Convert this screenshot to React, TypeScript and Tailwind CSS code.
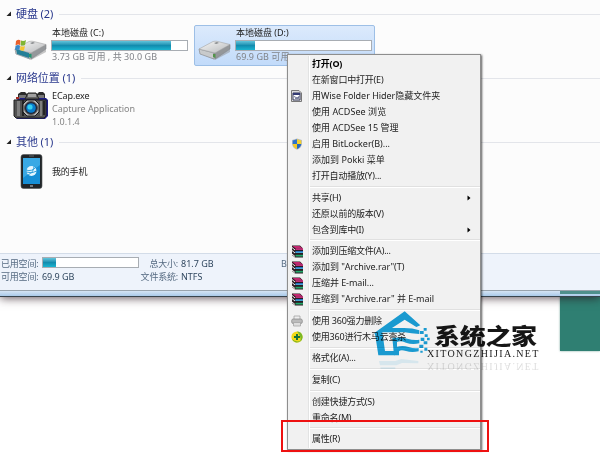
import type { ReactNode } from 'react';

interface MenuEntry {
  label?: string;
  icon?: ReactNode;
  bold?: boolean;
  submenu?: boolean;
  tracking?: string;
}

const menuEntries: MenuEntry[] = [
  { label: '打开(O)', bold: true },
  { label: '在新窗口中打开(E)' },
  { label: '用Wise Folder Hider隐藏文件夹', icon: <WiseIcon />, tracking: 'tracking-[-0.03px]' },
  { label: '使用 ACDSee 浏览', tracking: 'tracking-[0.05px]' },
  { label: '使用 ACDSee 15 管理', tracking: 'tracking-[0.02px]' },
  { label: '启用 BitLocker(B)...', icon: <ShieldIcon />, tracking: 'tracking-[-0.02px]' },
  { label: '添加到 Pokki 菜单', tracking: 'tracking-[0.03px]' },
  { label: '打开自动播放(Y)...' },
  {},
  { label: '共享(H)', submenu: true },
  { label: '还原以前的版本(V)' },
  { label: '包含到库中(I)', submenu: true },
  {},
  { label: '添加到压缩文件(A)...', icon: <RarIcon /> },
  { label: '添加到 "Archive.rar"(T)', icon: <RarIcon />, tracking: 'tracking-[-0.05px]' },
  { label: '压缩并 E-mail...', icon: <RarIcon />, tracking: 'tracking-[-0.05px]' },
  { label: '压缩到 "Archive.rar" 并 E-mail', icon: <RarIcon />, tracking: 'tracking-[-0.02px]' },
  {},
  { label: '使用 360强力删除', icon: <ShredIcon /> },
  { label: '使用360进行木马云查杀', icon: <ScanIcon /> },
  {},
  { label: '格式化(A)...' },
  {},
  { label: '复制(C)' },
  {},
  { label: '创建快捷方式(S)' },
  { label: '重命名(M)' },
  {},
  { label: '属性(R)' },
];

export default function App() {
  return (
    <div className="relative h-[456px] w-[600px] overflow-hidden bg-white font-['Noto_Sans','Noto_Sans_CJK_SC',sans-serif] text-[9px] leading-[12px] tracking-[-0.2px] text-[#222]">
      <div className="absolute left-[560px] top-[290px] h-[61px] w-10 bg-[#2f7f72] shadow-[0_0_2px_#7aa79f]" />
      <ExplorerWindow />
      <ContextMenu />
      <Watermark />
      <div className="absolute left-[281px] top-[420px] h-[32px] w-[208px] border-2 border-[#ee1111]" />
    </div>
  );
}

function ExplorerWindow() {
  return (
    <div className="relative flex h-[297px] flex-col bg-[#fcfcfc] shadow-[0_1px_9px_rgba(40,20,30,0.75)]">
      <div className="flex h-[253px] flex-col">
        <GroupHeader title="硬盘 (2)" className="mt-[6px]" />
        <div className="mt-[3px] flex h-[41px] pl-[10px]">
          <Drive name="本地磁盘 (C:)" info="3.73 GB 可用 , 共 30.0 GB" percent={88} system />
          <Drive name="本地磁盘 (D:)" info="69.9 GB 可用" percent={14} selected />
        </div>
        <GroupHeader title="网络位置 (1)" className="mt-[4px]" />
        <div className="mt-[4px] flex h-[39px] pl-[13px]">
          <CameraIcon />
          <div className="ml-[3px] leading-[12.8px]">
            <p className="tracking-[-0.1px]">ECap.exe</p>
            <p className="tracking-[-0.02px] text-[#858585]">Capture Application</p>
            <p className="tracking-[-0.02px] text-[#858585]">1.0.1.4</p>
          </div>
        </div>
        <GroupHeader title="其他 (1)" className="mt-[5px]" />
        <div className="mt-[4px] flex items-center pl-[20px]">
          <PhoneIcon />
          <span className="ml-[9px]">我的手机</span>
        </div>
      </div>
      <DetailsPane />
      <div className="h-px bg-[#98a3ad]" />
      <div className="flex h-[5px] bg-gradient-to-b from-[#d5e4f4] to-[#a9c9e9]">
        <div className="ml-auto h-[3px] w-10 bg-[#4f8f8c]" />
      </div>
      <div className="h-px bg-[#38434c]" />
    </div>
  );
}

function GroupHeader({ title, className }: { title: string; className: string }) {
  return (
    <div className={`flex h-4 shrink-0 items-center pl-[6px] ${className}`}>
      <svg width="6" height="6" viewBox="0 0 6 6">
        <path d="M5 0.5V5H0.5Z" fill="#222" />
      </svg>
      <h2 className="ml-[4px] whitespace-nowrap text-[11px] leading-4 tracking-[-0.08px] text-[#28378c]">{title}</h2>
      <div className="ml-[6px] h-px flex-1 bg-[#e3e5ea]" />
    </div>
  );
}

interface DriveProps {
  name: string;
  info: string;
  percent: number;
  system?: boolean;
  selected?: boolean;
}

function Drive({ name, info, percent, system, selected }: DriveProps) {
  return (
    <div
      className={`flex rounded-[2px] border ${
        selected
          ? 'w-[181px] border-[#9dbfe6] bg-gradient-to-b from-[#dceafc] to-[#c2dbfa] pl-[2px]'
          : 'mr-[3px] w-[181px] border-transparent pl-[2px]'
      }`}
    >
      <DriveIcon system={system} />
      <div className="ml-[2px] mt-px">
        <p className="whitespace-nowrap pl-px tracking-[0px]">{name}</p>
        <CapacityBar percent={percent} className="mt-px h-[11px] w-[137px]" />
        <p className="whitespace-nowrap pl-px tracking-[0.05px] text-[#808388]">{info}</p>
      </div>
    </div>
  );
}

function CapacityBar({ percent, className }: { percent: number; className: string }) {
  return (
    <div className={`border border-[#a8adb3] bg-white ${className}`}>
      <div
        className="h-full bg-gradient-to-b from-[#5fc5dc] via-[#128cae] to-[#1bb4d0]"
        style={{ width: `${percent}%` }}
      />
    </div>
  );
}

function DetailsPane() {
  return (
    <div className="flex h-[37px] border-t border-[#d3dce8] bg-[#eef3fb] pt-[3px] leading-[13px] text-[#566b82]">
      <div className="w-[41px] whitespace-nowrap pl-px">
        <p>已用空间:</p>
        <p>可用空间:</p>
      </div>
      <div className="w-[99px] text-[#30475f]">
        <CapacityBar percent={14} className="mb-[2px] ml-px h-[11px] w-[97px]" />
        <p className="pl-px tracking-[-0.05px]">69.9 GB</p>
      </div>
      <div className="w-[38px] whitespace-nowrap text-right">
        <p>总大小:</p>
        <p>文件系统:</p>
      </div>
      <div className="ml-[3px] w-[100px] tracking-[0px] text-[#30475f]">
        <p>81.7 GB</p>
        <p>NTFS</p>
      </div>
      <p>B</p>
    </div>
  );
}

function ContextMenu() {
  return (
    <div className="absolute left-[287px] top-[54px] h-[396px] w-[194px] border border-[#8e8e8e] bg-[#f1f1f1] py-px shadow-[1px_1px_2px_rgba(0,0,0,0.65)]">
      <div className="h-full bg-[linear-gradient(to_right,transparent_20px,#e2e3e3_20px,#e2e3e3_21px,#fff_21px,#fff_22px,transparent_22px)]">
        {menuEntries.map((entry, i) =>
          entry.label ? (
            <div key={i} className="flex h-4 items-center">
              <div className="flex w-[24px] shrink-0 pl-[3px]">{entry.icon}</div>
              <span
                className={`whitespace-nowrap leading-4 ${entry.bold ? 'font-bold text-black' : ''} ${entry.tracking ?? ''}`}
              >
                {entry.label}
              </span>
              {entry.submenu && (
                <svg className="ml-auto mr-[9px]" width="4" height="6" viewBox="0 0 4 6">
                  <path d="M0.5 0.5L3.5 3L0.5 5.5Z" fill="#000" />
                </svg>
              )}
            </div>
          ) : (
            <div key={i} className="flex h-[5.6px] items-center pl-[22px]">
              <div className="h-[2px] flex-1 border-t border-[#e0e0e0] bg-white" />
            </div>
          ),
        )}
      </div>
    </div>
  );
}

function Watermark() {
  return (
    <div className="absolute left-[374px] top-[311px] flex mix-blend-multiply">
      <svg width="56" height="60" viewBox="12 18 168 180">
        <g fill="#1ba3dc">
          <path d="M13 84L104 19L151 61L139 66L104 44L66 69H102Q128 69 148 76V87Q123 86 104 82H37L45 138H74V151H25L16 92Z" />
          <path d="M67 99Q92 95 112 101T148 104V115Q126 120 108 113T81 111V125Q99 120 116 126T146 129V139Q124 143 108 138T87 139V151H72Z" />
          <path d="M150 78h11v9h-11zM161 69h9v8h-9zM164 88h9v8h-9zM152 98h11v10h-11zM171 98h8v8h-8zM161 109h11v9h-11zM148 119h12v10h-12zM163 128h9v9h-9zM151 137h7v6h-7z" />
        </g>
        <path d="M27 168H76L94 162L145 168V175L96 174L79 181H30ZM31 187H76V192H32Z" fill="#1ba3dc" opacity=".12" />
      </svg>
      <div className="-ml-[1px] pt-[13px]">
        <p className="ml-[5px] origin-top scale-y-[0.84] whitespace-nowrap font-['Noto_Sans_CJK_SC',sans-serif] text-[26px] font-black leading-[25px] tracking-[-0.3px] text-[#161616]">
          系统之家
        </p>
        <p className="-ml-[2px] mt-[-1px] whitespace-nowrap font-['Liberation_Serif',serif] text-[10px] leading-[12px] tracking-[1.35px] text-[#222]">
          XITONGZHIJIA.NET
        </p>
        <p className="-ml-[2px] -scale-y-100 whitespace-nowrap font-['Liberation_Serif',serif] text-[10px] leading-[12px] tracking-[1.35px] text-[#222] opacity-15">
          XITONGZHIJIA.NET
        </p>
      </div>
    </div>
  );
}

function DriveIcon({ system }: { system?: boolean }) {
  return (
    <svg className="mt-[12px] shrink-0" width="36" height="24" viewBox="0 0 36 24">
      <defs>
        <linearGradient id="driveTop" x1="0" y1="0" x2="1" y2="1">
          <stop offset="0" stopColor="#f8f8f8" />
          <stop offset="1" stopColor="#b6b8ba" />
        </linearGradient>
      </defs>
      <path d="M2 15L17 21L33 11V14L18 22Z" fill="#8d8d8d" opacity=".5" />
      <path d="M2 11L17 15V21L3 16Z" fill="#c8cacb" stroke="#8b8d8f" strokeWidth=".7" />
      <path d="M17 15L33 6.500V11L18 21Z" fill="#94979a" stroke="#808386" strokeWidth=".6" />
      <path d="M2 11L16 3.500Q18 3 20 3.300L33 6.500L18 15Z" fill="url(#driveTop)" stroke="#a5a5a5" strokeWidth=".6" />
      <path d="M17 5l3-1 2 1-3 1z" fill="#86898b" />
      <path d="M16 16L18.500 16V20L16 19Z" fill={system ? '#21956e' : '#52944a'} />
      {system && (
        <g>
          <path d="M3 11L16 15V20L4 16Z" fill="#257f97" />
          <path d="M3 3q2.500-2 4.500-.5L7 7Q5 6 2.500 7.500Z" fill="#e8602c" />
          <path d="M8 2.500q2.500 1 5-.5L12 7Q10 8 7.500 7Z" fill="#80b533" />
          <path d="M2.500 8q2-1.500 4.500-.5L6.500 12Q4 11 2 12Z" fill="#3789c8" />
          <path d="M7.500 8q2.500 1 4.500 0L11 12.500Q9 13 7 12Z" fill="#f5c630" />
        </g>
      )}
    </svg>
  );
}

function CameraIcon() {
  return (
    <svg className="shrink-0" width="36" height="31" viewBox="0 0 36 31">
      <path d="M3 10L7 8H33L35 10V26L32 29H4L1 26Z" fill="#1c1c84" />
      <path d="M5 7V4L8 2H12L14 4V7ZM24 7V4L26 2H30L32 4V8Z" fill="#2b2b2b" />
      <path d="M6 5h7v3H6zM25 5h6v3h-6z" fill="#777" />
      <path d="M12 9L15 3H23L26 9Z" fill="#666" stroke="#222" />
      <path d="M15 4h8v3h-8z" fill="#a1a1a1" />
      <path d="M1 10H33V26L31 28H3L1 26Z" fill="#515151" stroke="#202020" />
      <path d="M4 11h3v15H4zM27 11h2v15h-2z" fill="#7e7e7e" />
      <path d="M9 10h2v16H9zM30 11h2v14h-2z" fill="#242424" />
      <path d="M14 10H22L26 14V22L22 26H14L10 22V14Z" fill="#b5b5b5" stroke="#1a1a1a" />
      <circle cx="18" cy="18" r="6.500" fill="#202638" stroke="#555" />
      <circle cx="18" cy="18" r="4.800" fill="#087dcc" />
      <circle cx="17" cy="17" r="2.600" fill="#35d1ef" />
      <path d="M3 7h3v2H3z" fill="#a32a22" />
    </svg>
  );
}

function PhoneIcon() {
  return (
    <svg width="23" height="35" viewBox="0 0 23 35">
      <rect x="1" y=".5" width="21" height="34" rx="2.500" fill="#202529" stroke="#555" strokeWidth=".6" />
      <rect x="3" y="4" width="17" height="26" fill="#168ed5" />
      <path d="M3 4H20V11L3 24Z" fill="#39a9e5" />
      <path d="M9 2h5" stroke="#7b8288" strokeWidth=".7" />
      <circle cx="11.500" cy="17" r="5" fill="#e5f6ff" />
      <path d="M6 16Q12 18 16 13M8 21Q14 18 14 12M6 18Q12 20 17 17" fill="none" stroke="#2398d8" strokeWidth=".9" />
      <path d="M10 32h3" stroke="#adb5bb" strokeWidth="1.200" />
    </svg>
  );
}

function WiseIcon() {
  return (
    <svg width="11" height="12" viewBox="0 0 11 12">
      <path d="M.5.500H8L10.500 3V11.500H.5Z" fill="#dcdcdf" stroke="#777" />
      <path d="M2 3h7v7H2z" fill="#fff" stroke="#323755" />
      <path d="M2 3h7v2H2z" fill="#353c75" />
      <path d="M3.500 6L5 9l1-2 1 2 1-3" fill="none" stroke="#454c76" strokeWidth=".8" />
    </svg>
  );
}

function ShieldIcon() {
  return (
    <svg width="12" height="12" viewBox="0 0 12 12">
      <path d="M6 .4L11 2V6Q10.500 10 6 11.700Q1.500 10 1 6V2Z" fill="#b7bcc4" />
      <path d="M6 1.200V6H1.700V2.500Z" fill="#2e73cb" />
      <path d="M6 1.200V6h4.300V2.500Z" fill="#f4d02e" />
      <path d="M1.700 6H6v5Q2.300 9.500 1.700 6Z" fill="#f5ca25" />
      <path d="M6 6h4.300Q9.700 9.500 6 11Z" fill="#2869bd" />
    </svg>
  );
}

// stack of three books
function RarIcon() {
  return (
    <svg width="13" height="13" viewBox="0 0 13 13">
      <path d="M1 .5H9L12 3.500V12.500H4L1 10Z" fill="#2a1c22" />
      <path d="M1.500 1H8.500L11 3H4Z" fill="#c0266e" />
      <path d="M4.500 3.300H12V4.800H4.500Z" fill="#e5348c" />
      <path d="M4.500 6H12V8H4.500Z" fill="#2a6fc0" />
      <path d="M4.500 7.200H12V8H4.500Z" fill="#4ab4d6" />
      <path d="M4.500 9.800H12V11.500H4.500Z" fill="#22a868" />
      <path d="M1 2.500L4 5M1 5.500L4 8M1 9L4 11.500" stroke="#f3eeee" strokeWidth="1" />
    </svg>
  );
}

function ShredIcon() {
  return (
    <svg width="12" height="12" viewBox="0 0 12 12">
      <path d="M3 1H9V5H3Z" fill="#eee" stroke="#999" strokeWidth=".7" />
      <rect x=".7" y="4" width="10.600" height="4.500" rx="1.500" fill="#bbb" stroke="#858585" strokeWidth=".7" />
      <path d="M2.500 7.500H9.500V11H2.500Z" fill="#f4f4f4" stroke="#999" strokeWidth=".7" />
      <path d="M4 8v3M6 8v3M8 8v3" stroke="#aaa" strokeWidth=".6" />
    </svg>
  );
}

function ScanIcon() {
  return (
    <svg width="12" height="12" viewBox="0 0 12 12">
      <circle cx="6" cy="6" r="5.600" fill="#f0d916" />
      <path d="M6 .4A5.600 5.600 0 0 1 9 10.700Q11 6 6 .4Z" fill="#78b829" />
      <path d="M1 8Q5 12 10 9.500Q8 12 5 11.500Q2 11 1 8Z" fill="#7cb326" />
      <path d="M5 3h2v2h2v2H7v2H5V7H3V5h2z" fill="#14713a" />
    </svg>
  );
}
